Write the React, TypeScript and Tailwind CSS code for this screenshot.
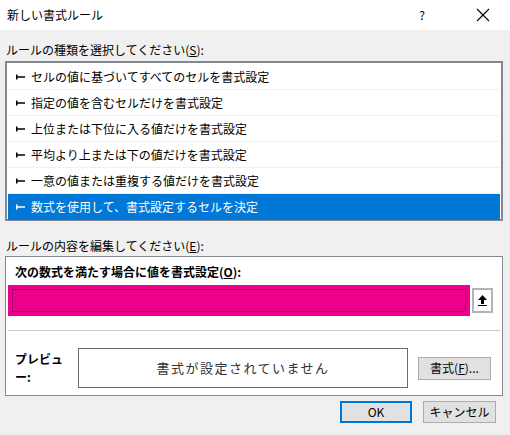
import React from "react";

const items = [
  "セルの値に基づいてすべてのセルを書式設定",
  "指定の値を含むセルだけを書式設定",
  "上位または下位に入る値だけを書式設定",
  "平均より上または下の値だけを書式設定",
  "一意の値または重複する値だけを書式設定",
  "数式を使用して、書式設定するセルを決定",
];

export default function App() {
  return (
    <div
      className="w-[510px] h-[435px] bg-[#f0f0f0] text-[12px] text-black relative overflow-hidden"
      style={{ fontFamily: '"Noto Sans CJK JP", "Noto Sans", sans-serif' }}
    >
      <div className="h-[30px] bg-white flex items-center pl-[7px]">
        <span className="flex-1">新しい書式ルール</span>
        <span className="w-[20px] text-center mr-[44px]">?</span>
        <svg width="14" height="14" viewBox="0 0 14 14" className="mr-[20px]">
          <path d="M1 1L13 13M13 1L1 13" stroke="#000" strokeWidth="1.1" />
        </svg>
      </div>
      <div className="pl-[6px] pt-[11px] h-[21px] leading-[18px]">
        ルールの種類を選択してください(<u>S</u>):
      </div>
      <div className="mx-[5px] mt-[10px] w-[498px] h-[160px] border-2 border-[#828790] bg-white p-[1px]">
        {items.map((t, i) => (
          <div
            key={i}
            className={`h-[26px] flex items-center pl-[8px] gap-[6px] ${
              i === 5 ? "bg-[#0078d7] text-white" : "border-b border-[#f0f0f0]"
            }`}
          >
            <svg width="9" height="6" viewBox="0 0 9 6">
              <path d="M0 0.5h1.5v5H0z M1.5 2.2h7.5v1.6H1.5z" fill={i === 5 ? "#fff" : "#000"} />
            </svg>
            <span>{t}</span>
          </div>
        ))}
      </div>
      <div className="pl-[6px] pt-[16px] h-[35px] leading-[18px]">
        ルールの内容を編集してください(<u>E</u>):
      </div>
      <div className="mx-[5px] w-[498px] h-[140px] border border-[#828790] bg-white flex flex-col">
        <div className="pl-[9px] pt-[6px] h-[28px] font-bold">
          次の数式を満たす場合に値を書式設定(<u>O</u>):
        </div>
        <div className="flex items-center pl-[2px]">
          <div className="w-[462px] h-[31px] bg-[#ec008c] p-[4px]">
            <div className="w-full h-full border border-[#a0006a]" />
          </div>
          <div className="ml-[2px] w-[21px] h-[25px] border-2 border-[#b4b4b4] bg-white flex items-center justify-center">
            <svg width="9" height="11" viewBox="0 0 9 11">
              <path d="M4.5 0L9 5H6v4H3V5H0z M0 10h9v1H0z" fill="#000" />
            </svg>
          </div>
        </div>
        <div className="mx-[2px] mt-[14px] border-t border-[#c8c8c8]" />
        <div className="flex items-center mt-[17px]">
          <span className="w-[72px] pl-[9px] font-bold">プレビュー:</span>
          <div className="w-[330px] h-[40px] border border-[#6d6d6d] flex items-center justify-center text-[13px] tracking-[1.5px] text-[#333]">
            書式が設定されていません
          </div>
          <div className="ml-[10px] w-[73px] h-[23px] border border-[#adadad] bg-[#e1e1e1] flex items-center justify-center">
            書式(<u>F</u>)...
          </div>
        </div>
      </div>
      <div className="flex justify-end gap-[11px] pr-[14px] mt-[5px]">
        <div className="w-[72px] h-[22px] border-2 border-[#0078d7] bg-[#e1e1e1] flex items-center justify-center">
          OK
        </div>
        <div className="w-[73px] h-[22px] border border-[#adadad] bg-[#e1e1e1] flex items-center justify-center">
          キャンセル
        </div>
      </div>
    </div>
  );
}
